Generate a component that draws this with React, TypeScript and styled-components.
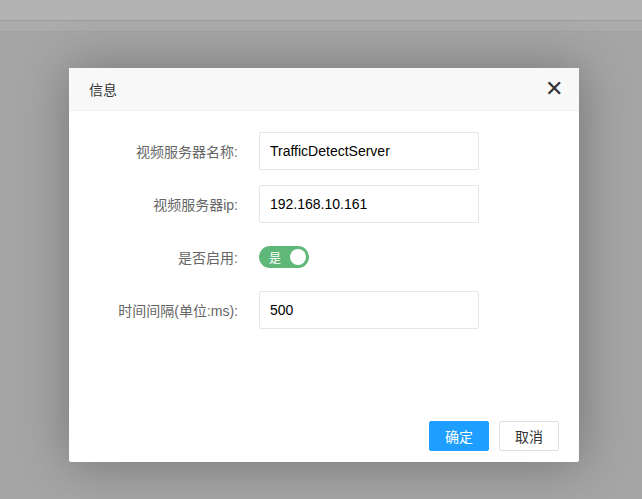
import React from 'react';
import styled, { createGlobalStyle } from 'styled-components';

const GlobalStyle = createGlobalStyle`
  html, body { margin: 0; padding: 0; background: #a5a5a5; height: 100%; }
  body { font-family: "Liberation Sans", "Noto Sans CJK SC", sans-serif; }
`;

const TopBar = styled.div`
  height: 20px;
  background: #b3b3b3;
  border-bottom: 1px solid #9c9c9c;
`;

const SubBar = styled.div`
  height: 10px;
  background: #ababab;
  border-bottom: 1px solid #a2a2a2;
`;

const Modal = styled.div`
  margin: 36px 0 0 69px;
  width: 510px;
  height: 394px;
  background: #fff;
  border-radius: 2px;
  box-shadow: 1px 1px 50px rgba(0, 0, 0, 0.3);
  display: flex;
  flex-direction: column;
`;

const Header = styled.div`
  height: 42px;
  background: #f8f8f8;
  border-bottom: 1px solid #eee;
  display: flex;
  align-items: center;
  justify-content: space-between;
  padding: 0 16px 0 20px;
  font-size: 14px;
  color: #333;
`;

const Close = styled.span`
  font-size: 22px;
  line-height: 1;
  color: #333;
  font-weight: 300;
  cursor: pointer;
`;

const Body = styled.div`
  flex: 1;
  padding-top: 21px;
  display: flex;
  flex-direction: column;
  gap: 15px;
`;

const Row = styled.div`
  display: flex;
  align-items: center;
  height: 38px;
`;

const Label = styled.label`
  width: 169px;
  text-align: right;
  font-size: 14px;
  color: #666;
  margin-right: 21px;
`;

const Input = styled.input`
  width: 220px;
  height: 38px;
  box-sizing: border-box;
  border: 1px solid #e6e6e6;
  border-radius: 2px;
  padding: 0 10px;
  font-size: 14px;
  font-family: inherit;
  color: #000;
`;

const Switch = styled.div`
  width: 50px;
  height: 22px;
  border-radius: 11px;
  background: #5fb878;
  display: flex;
  align-items: center;
  justify-content: space-between;
  padding: 0 3px 0 10px;
  box-sizing: border-box;
  color: #fff;
  font-size: 12px;
`;

const Knob = styled.span`
  width: 16px;
  height: 16px;
  border-radius: 50%;
  background: #fff;
`;

const Footer = styled.div`
  display: flex;
  justify-content: flex-end;
  gap: 10px;
  padding: 0 20px 11px;
`;

const Button = styled.button<{ primary?: boolean }>`
  height: 30px;
  width: 60px;
  border-radius: 2px;
  font-size: 14px;
  font-family: inherit;
  border: 1px solid ${({ primary }) => (primary ? '#1e9fff' : '#dedede')};
  background: ${({ primary }) => (primary ? '#1e9fff' : '#fff')};
  color: ${({ primary }) => (primary ? '#fff' : '#333')};
  cursor: pointer;
`;

const App: React.FC = () => (
  <>
    <GlobalStyle />
    <TopBar />
    <SubBar />
    <Modal>
      <Header>
        <span>信息</span>
        <Close>✕</Close>
      </Header>
      <Body>
        <Row>
          <Label>视频服务器名称:</Label>
          <Input defaultValue="TrafficDetectServer" />
        </Row>
        <Row>
          <Label>视频服务器ip:</Label>
          <Input defaultValue="192.168.10.161" />
        </Row>
        <Row>
          <Label>是否启用:</Label>
          <Switch>
            是<Knob />
          </Switch>
        </Row>
        <Row>
          <Label>时间间隔(单位:ms):</Label>
          <Input defaultValue="500" />
        </Row>
      </Body>
      <Footer>
        <Button primary>确定</Button>
        <Button>取消</Button>
      </Footer>
    </Modal>
  </>
);

export default App;
